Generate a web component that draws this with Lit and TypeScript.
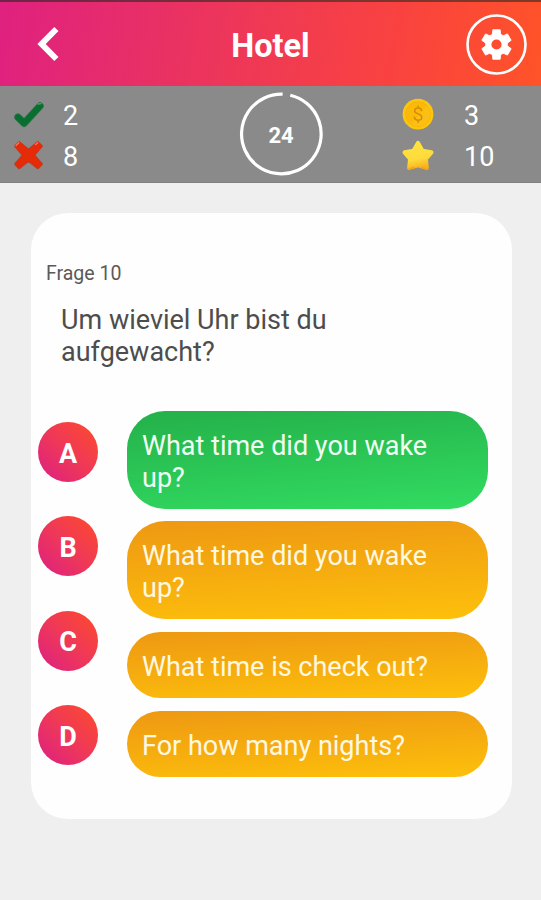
import { LitElement, html, css, svg } from "lit";
import { customElement } from "lit/decorators.js";
import { classMap } from "lit/directives/class-map.js";

const check = svg`
  <path d="M5 17.2 L11.2 23.2 L27 6" fill="none" stroke="#3f7457" stroke-width="7.6" stroke-linecap="round" stroke-linejoin="round"/>
  <path d="M5 17.2 L11.2 23.2 L27 6" fill="none" stroke="#07702f" stroke-width="6.2" stroke-linecap="round" stroke-linejoin="round"/>
  <path d="M25 4 L28 3.6" stroke="#4fa273" stroke-width="1.3" stroke-linecap="round"/>`;

const crossShape = "M6.2 1.4 L15.5 9 L24.8 1.4 L28.6 5.2 L20.8 14.2 L28.6 23.2 L24.8 27 L15.5 19.4 L6.2 27 L2.4 23.2 L10.2 14.2 L2.4 5.2 Z";

const cross = svg`
  <path d=${crossShape} fill="#a84a37" stroke="#a84a37" stroke-width="2.6" stroke-linejoin="round"/>
  <path d=${crossShape} fill="#e52b08" stroke="#e52b08" stroke-width="1.4" stroke-linejoin="round"/>
  <path d="M3 4.6 L5.8 1.8 M22.6 3.6 L24.8 1.8" stroke="#f07f60" stroke-width="1.3" stroke-linecap="round"/>`;

const coin = svg`
  <circle cx="16" cy="14.2" r="15.4" fill="#fcc60e"/>
  <circle cx="16" cy="14.2" r="12.4" fill="#fbb90a" stroke="#f7b006" stroke-width=".8"/>
  <path d="M25 5.7 A12.3 12.3 0 0 1 9 24.2 Z" fill="#fdc51a" opacity=".6"/>
  <path d="M19.6 10.6 C19.3 8.6 17.9 7.9 16.1 7.9 C14 7.9 12.6 9 12.6 10.8 C12.6 14.8 19.8 13 19.8 17.2 C19.8 19.1 18.2 20.2 16.1 20.2 C14 20.2 12.6 19.2 12.3 17.2 M16.1 6 V7.9 M16.1 20.2 V22.2" fill="none" stroke="#d58d08" stroke-width="1.5" stroke-linecap="round"/>`;

const star = svg`
  <defs><linearGradient id="st" x1=".3" y1="0" x2=".55" y2="1"><stop offset="0" stop-color="#ffe23c"/><stop offset=".65" stop-color="#fedb3c"/><stop offset="1" stop-color="#f8b31c"/></linearGradient></defs>
  <path d="M16 2 L20.4 9.8 L29.4 11.4 L23.8 18 L24.8 26.8 L16 24.2 L7.2 26.8 L8.2 18 L2.6 11.4 L11.6 9.8 Z" fill="url(#st)" stroke="url(#st)" stroke-width="4.2" stroke-linejoin="round"/>
  <path d="M7 28 L12 26.6 M20 26.6 L25 28" fill="none" stroke="#f2a51c" stroke-width="1.8" stroke-linecap="round"/>`;

const gearTooth = "M-4.4 -8 L-3.7 -14.8 H3.7 L4.4 -8 Z";

@customElement("app-root")
export class AppRoot extends LitElement {
  static styles = css`
    :host {
      display: flex;
      flex-direction: column;
      height: 900px;
      background: #efefef;
      font-family: Roboto, sans-serif;
      overflow: hidden;
    }
    * { box-sizing: border-box; }
    svg { display: block; flex: none; overflow: visible; }
    .status { height: 2px; flex: none; background: linear-gradient(90deg, #6f2448, #7b3330 60%, #7d3a28); }
    .header {
      height: 84px;
      flex: none;
      display: grid;
      grid-template-columns: 97px 1fr 97px;
      align-items: center;
      background: linear-gradient(100deg, #df2180 0%, #ef3954 48%, #f94240 72%, #ff5328 100%);
    }
    .back { justify-self: center; }
    .title {
      text-align: center;
      color: #fff;
      font-size: 32.5px;
      line-height: 38px;
      font-weight: 700;
      padding-top: 4px;
    }
    .gear { justify-self: end; margin-right: 14px; }
    .stats {
      height: 97px;
      flex: none;
      display: grid;
      grid-template-columns: 237px 88px 1fr;
      background: #8a8a8a;
      border-bottom: 1px solid #808080;
    }
    .col { display: flex; flex-direction: column; padding-top: 9px; }
    .col.left { padding-left: 13px; }
    .col.right { padding-left: 77px; }
    .stat {
      display: flex;
      align-items: center;
      height: 41px;
      color: #fff;
      font-size: 27px;
    }
    .left .stat { gap: 18px; }
    .right .stat { gap: 30px; }
    .timer { display: grid; place-items: center; height: 96px; }
    .timer > * { grid-area: 1 / 1; }
    .seconds { color: #fff; font-weight: 700; font-size: 22px; line-height: 28px; padding-top: 3px; }
    .card {
      margin: 30px 29px 0 31px;
      height: 606px;
      flex: none;
      border-radius: 37px;
      background: #fefefe;
      padding: 49px 24px 0 7px;
    }
    .number { margin-left: 8px; font-size: 19.5px; line-height: 24px; color: #5a5a5a; }
    .question {
      margin: 19px 0 0 23px;
      width: 330px;
      height: 64px;
      font-size: 27px;
      line-height: 31.6px;
      color: #4d4d4d;
    }
    .body { display: flex; justify-content: space-between; margin-top: 42px; }
    .letters { display: flex; flex-direction: column; gap: 34.4px; padding-top: 11px; }
    .letter {
      width: 60px;
      height: 60px;
      border-radius: 50%;
      display: grid;
      place-items: center;
      padding-top: 3px;
      background: linear-gradient(45deg, #dd2180 4%, #ef3858 50%, #fd4a2e 96%);
      color: #fff;
      font-size: 27px;
      font-weight: 700;
    }
    .answers { display: flex; flex-direction: column; gap: 12.5px; width: 361px; }
    .answer {
      border-radius: 38px;
      padding: 20px 50px 14.7px 15px;
      background: linear-gradient(177deg, #ee9813, #fdc00b);
      color: #fff8e0;
      font-size: 27px;
      line-height: 31.6px;
    }
    .answer.correct { background: linear-gradient(175deg, #24b04a, #32dc61); color: #effff2; }
  `;

  private answers = [
    { text: "What time did you wake up?", correct: true },
    { text: "What time did you wake up?", correct: false },
    { text: "What time is check out?", correct: false },
    { text: "For how many nights?", correct: false },
  ];

  private stat(icon: unknown, value: number) {
    return html`<div class="stat"><svg width="32" height="32" viewBox="0 0 32 32">${icon}</svg><span>${value}</span></div>`;
  }

  render() {
    return html`
      <div class="status"></div>
      <div class="header">
        <svg class="back" width="24" height="36" viewBox="0 0 24 36">
          <path d="M19.4 3 L4.6 18 L19.4 33" fill="none" stroke="#fff" stroke-width="6" />
        </svg>
        <div class="title">Hotel</div>
        <svg class="gear" width="61" height="61" viewBox="0 0 61 61">
          <circle cx="30.5" cy="30.5" r="29" fill="none" stroke="#fff" stroke-width="2.6" />
          <g transform="translate(30.5 30.5)" fill="#fff" stroke="#fff" stroke-linejoin="round">
            <circle r="8.2" fill="none" stroke-width="6.2" />
            ${[0, 60, 120, 180, 240, 300].map((a) => svg`<path d=${gearTooth} transform="rotate(${a})" stroke-width=".8"/>`)}
          </g>
        </svg>
      </div>
      <div class="stats">
        <div class="col left">${this.stat(check, 2)}${this.stat(cross, 8)}</div>
        <div class="timer">
          <svg width="86" height="86" viewBox="0 0 86 86">
            <path d="M52.3 4.2 A39.8 39.8 0 1 1 44.6 3.2" fill="none" stroke="#fff" stroke-width="3.2" />
          </svg>
          <div class="seconds">24</div>
        </div>
        <div class="col right">${this.stat(coin, 3)}${this.stat(star, 10)}</div>
      </div>
      <div class="card">
        <div class="number">Frage 10</div>
        <div class="question">Um wieviel Uhr bist du aufgewacht?</div>
        <div class="body">
          <div class="letters">${["A", "B", "C", "D"].map((l) => html`<div class="letter">${l}</div>`)}</div>
          <div class="answers">
            ${this.answers.map((a) => html`<div class=${classMap({ answer: true, correct: a.correct })}>${a.text}</div>`)}
          </div>
        </div>
      </div>
    `;
  }
}
